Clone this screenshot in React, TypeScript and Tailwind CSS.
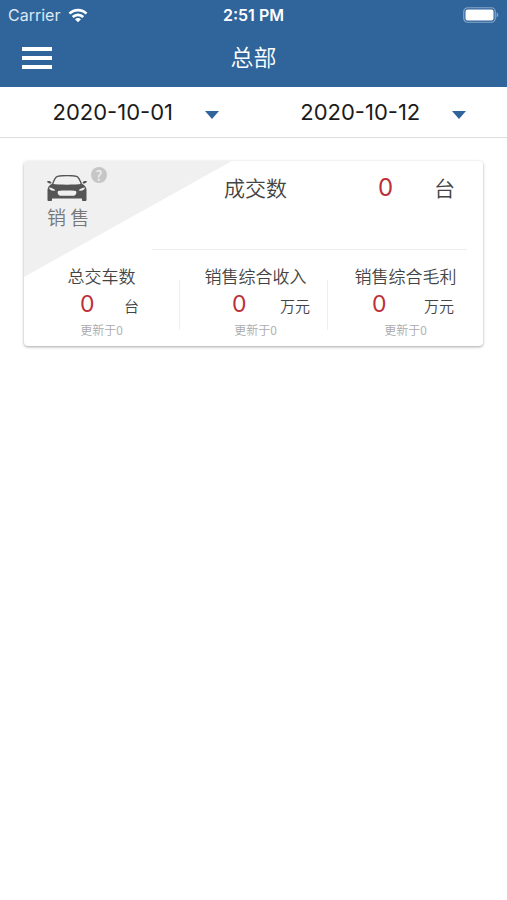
import React from 'react';

interface Metric {
  label: string;
  value: number;
  unit: string;
  updated: string;
  columnClass: string;
  valueClass: string;
}

const metrics: Metric[] = [
  { label: '总交车数', value: 0, unit: '台', updated: '更新于0', columnClass: 'flex-1', valueClass: 'pl-14 w-25' },
  { label: '销售综合收入', value: 0, unit: '万元', updated: '更新于0', columnClass: 'w-[147px] pl-1', valueClass: 'pl-12 w-24' },
  { label: '销售综合毛利', value: 0, unit: '万元', updated: '更新于0', columnClass: 'flex-1', valueClass: 'pl-11 w-24' },
];

const WifiIcon: React.FC = () => (
  <svg viewBox="0 0 20 15" className="w-5 h-[15px]" fill="none" stroke="white" strokeWidth="2.6" aria-hidden="true">
    <path d="M1.5 5.6C6.2 0.9 13.8 0.9 18.5 5.6" />
    <path d="M4.7 9C7.6 6.1 12.4 6.1 15.3 9" />
    <path d="M10 14.2L7 11.2C8.7 9.7 11.3 9.7 13 11.2Z" fill="white" stroke="none" />
  </svg>
);

const BatteryIcon: React.FC = () => (
  <svg viewBox="0 0 36 16" className="w-9 h-4" aria-hidden="true">
    <rect x="0.75" y="0.75" width="31.5" height="14.5" rx="4" fill="none" stroke="#86a7c9" strokeWidth="1.2" />
    <rect x="2.5" y="2.5" width="28" height="11" rx="2" fill="white" />
    <path d="M33.6 5.5C35.8 6.3 35.8 9.7 33.6 10.5Z" fill="#86a7c9" />
  </svg>
);

const CarIcon: React.FC = () => (
  <svg viewBox="0 0 40 26" className="w-10 h-[26px]" aria-hidden="true">
    <path
      d="M5.5 9.5C7 5 8.5 2 10.5 1.4C15 0.3 25 0.3 29.5 1.4C31.5 2 33 5 34.5 9.5"
      fill="none"
      stroke="#555"
      strokeWidth="1.4"
    />
    <path d="M0 6.5C1.5 5.6 3.5 6 4.5 7.5L4 8.5C2 8.5 0.5 8 0 6.5ZM40 6.5C38.5 5.6 36.5 6 35.5 7.5L36 8.5C38 8.5 39.5 8 40 6.5Z" fill="#555" />
    <path
      d="M5 8.8C12 10 28 10 35 8.8C38 10.5 39.5 12.5 39.5 15V25C39.5 25.6 39 26 38.5 26H36C35.4 26 35 25.6 35 25V23.5H5V25C5 25.6 4.6 26 4 26H1.5C1 26 0.5 25.6 0.5 25V15C0.5 12.5 2 10.5 5 8.8Z"
      fill="#555"
    />
    <path d="M2 12.5C4.5 12.8 7 13.8 8.5 15.5C5.5 16 2.5 15.5 2 12.5ZM38 12.5C35.5 12.8 33 13.8 31.5 15.5C34.5 16 37.5 15.5 38 12.5Z" fill="#f0f0f0" />
    <path d="M11 16C16 15.4 24 15.4 29 16C30 18 29 20 27 20.7H13C11 20 10 18 11 16Z" fill="#f0f0f0" />
  </svg>
);

const DateButton: React.FC<{ date: string }> = ({ date }) => (
  <button type="button" className="flex flex-1 items-center justify-center gap-8 text-[22px] leading-[50px] text-[#1b1b1b]">
    {date}
    <svg viewBox="0 0 14 8" className="mt-1.5 w-[14px] h-2" aria-hidden="true">
      <path d="M0 0H14L7 8Z" fill="#30659b" />
    </svg>
  </button>
);

const MetricColumn: React.FC<{ metric: Metric }> = ({ metric }) => (
  <div className={metric.columnClass}>
    <h3 className="text-center text-[17px] leading-6">{metric.label}</h3>
    <p className="mt-0.5 flex items-baseline leading-7">
      <span className={`font-['Inter'] text-[23px] leading-7 font-normal text-[#bd2f38] ${metric.valueClass}`}>{metric.value}</span>
      <span className="text-[15px] whitespace-nowrap">{metric.unit}</span>
    </p>
    <p className="mt-0.5 text-center text-[12px] leading-4 text-[#aaa]">{metric.updated}</p>
  </div>
);

const SalesCard: React.FC = () => (
  <section className="relative mx-6 mt-[23px] overflow-hidden rounded-sm bg-white pb-2 font-['Noto_Sans_CJK_SC',sans-serif] font-[350] text-[#444] shadow-[0_1px_3px_rgba(0,0,0,0.35)]">
    <svg viewBox="0 0 208 116" className="absolute top-0 left-0 w-52 h-[116px]" aria-hidden="true">
      <path d="M0 0H208L0 116Z" fill="#f0f0f0" />
    </svg>
    <div className="relative flex h-[89px]">
      <div className="w-32 pt-[14px] pl-[23px]">
        <CarIcon />
        <h2 className="mt-1 text-[19px] leading-6 text-[#777]">销 售</h2>
      </div>
      <button
        type="button"
        aria-label="帮助"
        className="absolute top-1.5 left-[67px] size-4 rounded-full bg-[#c6c6c6] text-[14px] leading-4 font-medium text-[#f0f0f0]"
      >
        ?
      </button>
      <div className="mr-4 flex flex-1 items-baseline border-b border-[#eee] pt-2.5 leading-8">
        <span className="flex-1 pl-[72px] text-[21px]">成交数</span>
        <span className="w-14 font-['Inter'] text-2xl leading-8 font-normal text-[#bd2f38]">{0}</span>
        <span className="pr-3 text-[21px]">台</span>
      </div>
    </div>
    <div className="relative flex pt-[14px]">
      {metrics.map((metric, i) => (
        <React.Fragment key={metric.label}>
          {i > 0 && <div className="mt-4 h-[50px] w-px bg-[#eee]" />}
          <MetricColumn metric={metric} />
        </React.Fragment>
      ))}
    </div>
  </section>
);

export default function App() {
  return (
    <div className="min-h-screen bg-white font-['Inter','Noto_Sans_CJK_SC',sans-serif]">
      <header className="bg-[#30659b] text-white">
        <div className="grid grid-cols-3 items-center px-2 leading-[30px]">
          <div className="flex items-center gap-2 text-[16px] text-[#dde8f3]">
            Carrier
            <WifiIcon />
          </div>
          <span className="text-center text-[16px] font-semibold">2:51 PM</span>
          <div className="flex justify-end">
            <BatteryIcon />
          </div>
        </div>
        <div className="grid h-[57px] grid-cols-3 items-center px-[22px] pb-0.5">
          <button type="button" aria-label="菜单" className="flex w-[30px] flex-col gap-[5px]">
            <span className="h-1 bg-white" />
            <span className="h-1 bg-white" />
            <span className="h-1 bg-white" />
          </button>
          <h1 className="text-center text-[23px] leading-8 font-[350]">总部</h1>
        </div>
      </header>
      <div className="flex border-b border-[#ddd] pl-3">
        <DateButton date="2020-10-01" />
        <DateButton date="2020-10-12" />
      </div>
      <SalesCard />
    </div>
  );
}
